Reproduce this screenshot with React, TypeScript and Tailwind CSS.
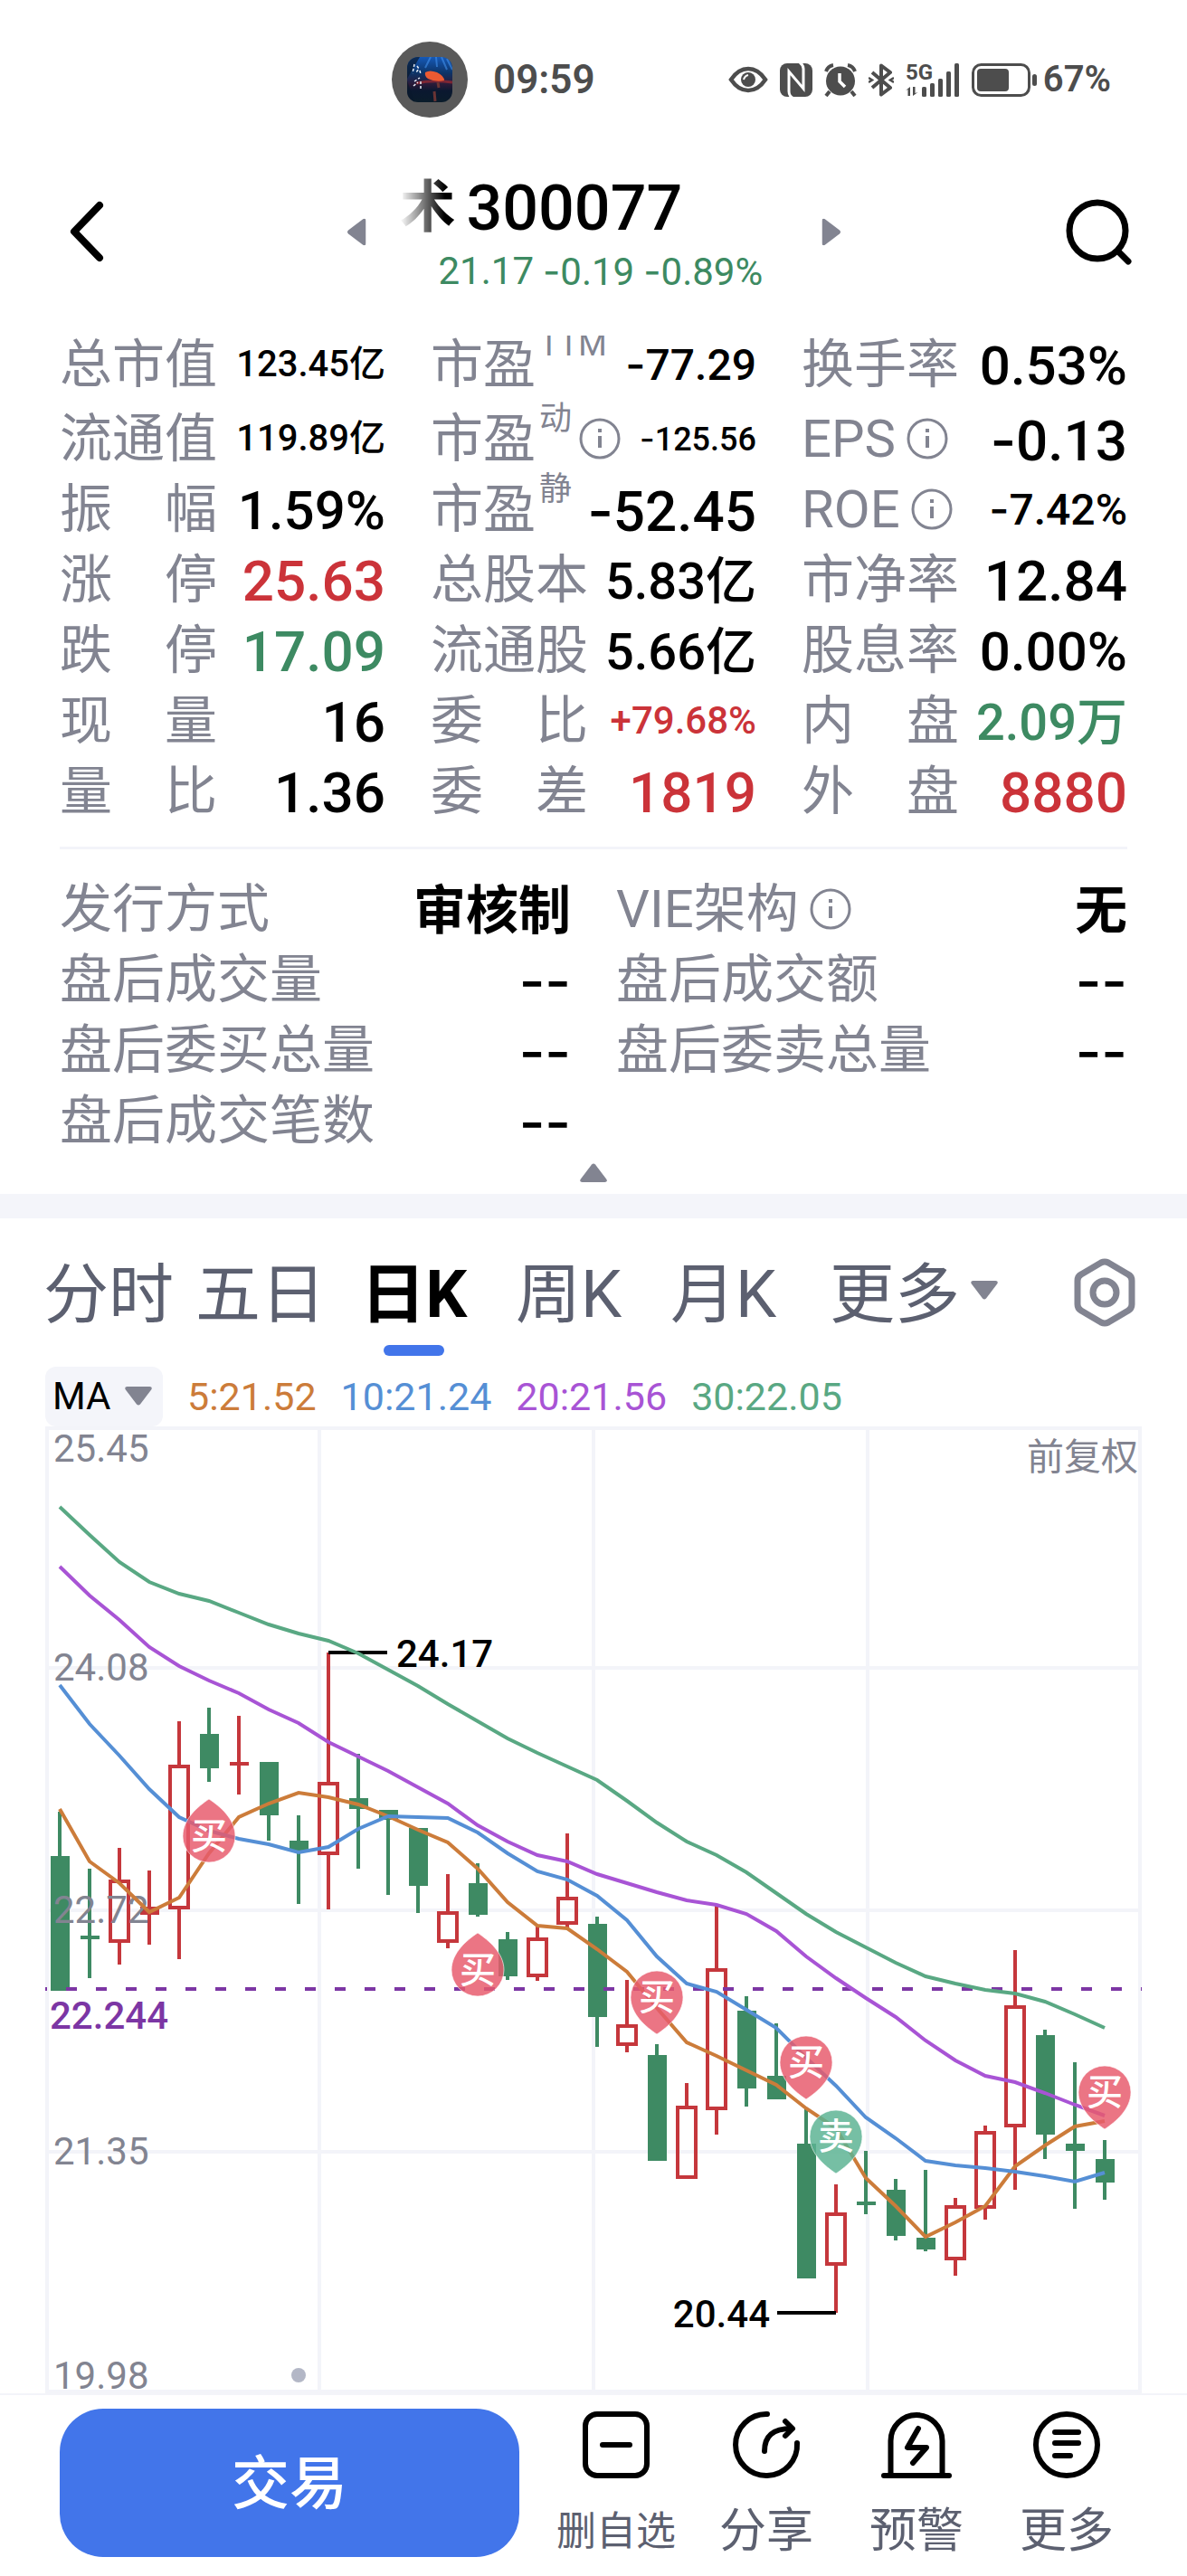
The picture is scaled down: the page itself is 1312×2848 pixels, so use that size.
import React from "react";
import clsx from "clsx";

const INK = "text-black";
const UP = "text-[#cb3339]";
const DOWN = "text-[#3d8a62]";

type Stat = {
  label: string;
  sup?: string;
  info?: boolean;
  value: string;
  size: string;
  color?: string;
};

const XS = "text-[36px]";
const SM = "text-[40px]";
const MD = "text-[48px]";
const LG = "text-[56px] pt-1";
const PCT = "text-[60px] pt-1";
const XL = "text-[62px] pt-1";

// row by row, three cells per row
const stats: Stat[] = [
  { label: "总市值", value: "123.45亿", size: SM },
  { label: "市盈", sup: "TTM", value: "-77.29", size: MD },
  { label: "换手率", value: "0.53%", size: PCT },
  { label: "流通值", value: "119.89亿", size: SM },
  { label: "市盈", sup: "动", info: true, value: "-125.56", size: XS },
  { label: "EPS", info: true, value: "-0.13", size: XL },
  { label: "振　幅", value: "1.59%", size: PCT },
  { label: "市盈", sup: "静", value: "-52.45", size: XL },
  { label: "ROE", info: true, value: "-7.42%", size: MD },
  { label: "涨　停", value: "25.63", size: XL, color: UP },
  { label: "总股本", value: "5.83亿", size: LG },
  { label: "市净率", value: "12.84", size: XL },
  { label: "跌　停", value: "17.09", size: XL, color: DOWN },
  { label: "流通股", value: "5.66亿", size: LG },
  { label: "股息率", value: "0.00%", size: PCT },
  { label: "现　量", value: "16", size: XL },
  { label: "委　比", value: "+79.68%", size: "text-[42px]", color: UP },
  { label: "内　盘", value: "2.09万", size: LG, color: DOWN },
  { label: "量　比", value: "1.36", size: XL },
  { label: "委　差", value: "1819", size: XL, color: UP },
  { label: "外　盘", value: "8880", size: XL, color: UP },
];

const details: Stat[] = [
  { label: "发行方式", value: "审核制", size: "text-[58px] pt-1 font-semibold" },
  { label: "VIE架构", info: true, value: "无", size: "text-[58px] pt-1 font-semibold" },
  { label: "盘后成交量", value: "--", size: XL },
  { label: "盘后成交额", value: "--", size: XL },
  { label: "盘后委买总量", value: "--", size: XL },
  { label: "盘后委卖总量", value: "--", size: XL },
  { label: "盘后成交笔数", value: "--", size: XL },
];

// [kind, high, body top, body bottom, low] in chart units
type Candle = ["up" | "down", number, number, number, number];

const candles: Candle[] = [
  ["down", 426, 475, 624, 624],
  ["down", 489, 563, 567, 610],
  ["up", 466, 501, 571, 595],
  ["up", 491, 531, 540, 573],
  ["up", 326, 374, 534, 589],
  ["down", 311, 340, 378, 393],
  ["up", 320, 371, 375, 407],
  ["down", 371, 371, 430, 458],
  ["down", 430, 458, 470, 528],
  ["up", 250, 393, 474, 534],
  ["down", 362, 411, 423, 489],
  ["down", 424, 424, 435, 518],
  ["down", 444, 444, 508, 538],
  ["up", 495, 536, 571, 577],
  ["down", 483, 505, 540, 542],
  ["down", 559, 567, 608, 612],
  ["up", 553, 565, 609, 613],
  ["up", 450, 520, 551, 554],
  ["down", 542, 550, 653, 686],
  ["up", 612, 661, 685, 692],
  ["down", 683, 695, 812, 812],
  ["up", 726, 751, 832, 832],
  ["up", 530, 599, 756, 783],
  ["down", 630, 646, 732, 752],
  ["down", 660, 718, 744, 744],
  ["down", 754, 793, 942, 942],
  ["up", 838, 869, 928, 980],
  ["down", 801, 857, 861, 871],
  ["down", 832, 844, 895, 900],
  ["down", 822, 897, 910, 912],
  ["up", 853, 861, 922, 939],
  ["up", 773, 779, 865, 877],
  ["up", 579, 640, 775, 844],
  ["down", 667, 673, 783, 810],
  ["down", 703, 793, 801, 865],
  ["down", 789, 810, 836, 855],
];

const averages = [
  {
    label: "5:21.52",
    text: "text-[#cc7c3a]",
    stroke: "#cc7c3a",
    points: [423, 481, 505, 537, 521, 472, 432, 417, 405, 410, 418, 431, 446, 460, 489, 526, 552, 555, 578, 603, 643, 681, 696, 712, 728, 754, 776, 831, 862, 896, 880, 862, 818, 795, 774, 768],
  },
  {
    label: "10:21.24",
    text: "text-[#558fd5]",
    stroke: "#558fd5",
    points: [286, 329, 364, 401, 432, 447, 456, 462, 471, 465, 445, 431, 432, 433, 449, 472, 492, 501, 519, 546, 586, 616, 625, 645, 665, 698, 729, 764, 787, 812, 817, 820, 824, 829, 835, 825],
  },
  {
    label: "20:21.56",
    text: "text-[#a854d5]",
    stroke: "#a854d5",
    points: [155, 187, 214, 244, 265, 281, 295, 313, 328, 349, 365, 381, 399, 417, 441, 459, 474, 481, 495, 505, 515, 524, 529, 539, 558, 586, 610, 632, 653, 679, 701, 718, 725, 737, 750, 762],
  },
  {
    label: "30:22.05",
    text: "text-[#59a883]",
    stroke: "#59a883",
    points: [89, 120, 150, 172, 185, 193, 206, 219, 229, 237, 251, 269, 287, 307, 326, 345, 361, 376, 391, 414, 438, 459, 474, 493, 516, 539, 559, 576, 593, 608, 616, 623, 627, 636, 650, 665],
  },
];

// y is the middle of the round part
const trades = [
  { at: 5, y: 453, side: "买", tip: "up" },
  { at: 14, y: 601, side: "买", tip: "up" },
  { at: 20, y: 631, side: "买", tip: "down" },
  { at: 25, y: 703, side: "买", tip: "down" },
  { at: 26, y: 785, side: "卖", tip: "down" },
  { at: 35, y: 736, side: "买", tip: "down" },
];

const xOf = (i: number) => 16 + i * 33;

function InfoIcon({ className }: { className?: string }) {
  return (
    <svg viewBox="0 0 46 46" className={clsx("size-[46px] shrink-0", className)} fill="none" stroke="#828491">
      <circle cx="23" cy="23" r="21" strokeWidth="3" />
      <path d="M23 20v13" strokeWidth="4" />
      <path d="M23 12v4" strokeWidth="4" />
    </svg>
  );
}

function Triangle({ className }: { className?: string }) {
  return (
    <svg viewBox="0 0 30 21" className={clsx("w-[30px] h-[21px] shrink-0", className)} fill="#828491">
      <path d="M13 1.5Q15-.5 17 1.5L29.500 18Q30.500 21 27.500 21H2.500Q-.5 21 .5 18Z" />
    </svg>
  );
}

// The sign is set in Inter, whose hyphen is as wide as a minus
function Num({ value }: { value: string }) {
  const sign = value.match(/^-+/)?.[0] ?? "";
  return (
    <>
      {sign && <span className="font-['Inter']">{sign}</span>}
      {value.slice(sign.length)}
    </>
  );
}

function StatCell({ stat }: { stat: Stat }) {
  return (
    <div className="flex items-center h-[78px] whitespace-nowrap">
      <dt className="flex items-center text-[58px] leading-[78px] text-[#828491]">
        {stat.label}
        {stat.sup && <sup className="static ml-1 pb-11 text-[36px] leading-none">{stat.sup}</sup>}
        {stat.info && <InfoIcon className={stat.sup ? "ml-2" : "ml-3"} />}
      </dt>
      <dd className={clsx("ml-auto font-medium leading-[78px]", stat.size, stat.color ?? INK)}>
        <Num value={stat.value} />
      </dd>
    </div>
  );
}

function StatusBar() {
  return (
    <div className="flex items-center justify-between h-[176px] pl-[433px] pr-[84px] text-[#4d4d4d]">
      <div className="flex items-center gap-7">
        <div className="flex items-center justify-center size-[84px] rounded-full bg-[#5a5a5a]">
          <svg viewBox="0 0 50 50" className="size-[50px] rounded-[12px]">
            <defs>
              <linearGradient id="sky" x1="0" y1="0" x2="0" y2="1">
                <stop offset="0" stopColor="#1559b8" />
                <stop offset=".35" stopColor="#0d3468" />
                <stop offset=".6" stopColor="#2a1a38" />
                <stop offset=".75" stopColor="#0a1830" />
                <stop offset="1" stopColor="#0a1c2a" />
              </linearGradient>
            </defs>
            <rect width="50" height="50" fill="url(#sky)" />
            <path d="M0 0h14L0 24zM0 50V26l8 24z" fill="#08182c" opacity=".7" />
            <path d="M26 0l-6 12M32 0l1 11M38 0l6 14M44 2l6 12" stroke="#4b9dfb" strokeWidth="2" opacity=".5" />
            <path d="M10 29q18-4 40-1" stroke="#b52a2c" strokeWidth="3" fill="none" opacity=".6" />
            <path d="M20 17q5-3 13 0q8 4 8 9q-10 2-18-2q-4-3-3-7z" fill="#ec5a32" />
            <path d="M34 28l1 6M30 38l1 11" stroke="#6a3434" strokeWidth="3" fill="none" />
            <path d="M8 8l-2 10M11 10l2 3-3 4M14 15l1 4M8 27l6-4M7 32l5-4M15 27v9" stroke="#e8eef8" strokeWidth="1.500" strokeDasharray="3 2" fill="none" />
          </svg>
        </div>
        <time className="text-[44px] leading-none font-semibold">09:59</time>
      </div>
      <div className="flex items-center gap-[13px]">
        <svg viewBox="0 0 44 30" className="w-[44px] h-[30px]" fill="none" stroke="currentColor">
          <path d="M3 15Q11 3 22 3t19 12Q33 27 22 27T3 15Z" strokeWidth="4.500" />
          <circle cx="22" cy="15" r="8" fill="currentColor" stroke="none" />
          <path d="M17 15q1-4 5-5" stroke="white" strokeWidth="2" />
        </svg>
        <svg viewBox="0 0 36 37" className="w-[36px] h-[37px]" fill="none">
          <rect width="36" height="37" rx="8" fill="currentColor" />
          <path d="M14 38Q10 36 10 31V9L26 28V6Q26 2 22-1" stroke="white" strokeWidth="3" />
        </svg>
        <svg viewBox="0 0 36 37" className="w-[36px] h-[37px]" fill="none" stroke="currentColor">
          <circle cx="18" cy="19.500" r="16" fill="currentColor" stroke="none" />
          <path d="M2 9q2-6 8-7M34 9q-2-6-8-7" strokeWidth="4" />
          <path d="M6 31l-4 5M30 31l4 5" strokeWidth="4" />
          <path d="M17 11v9l6 6" stroke="white" strokeWidth="3.500" />
        </svg>
        <svg viewBox="0 0 28 37" className="w-[28px] h-[37px]" fill="none" stroke="currentColor" strokeWidth="4">
          <path d="M4 10l20 17-10 7.500V2.500L24 10 4 27" strokeLinejoin="round" />
          <path d="M0 16l4 2.500L0 21M28 16l-4 2.500 4 2.500" strokeWidth="2.500" />
        </svg>
        <svg viewBox="0 0 60 37" className="w-[60px] h-[37px] overflow-visible" fill="currentColor">
          <text x="0" y="18" fontSize="24" fontWeight="700" fontFamily="Roboto, sans-serif">5G</text>
          <path d="M5 26v10H2.500v-7L0 30zM8 36V26h2.500v7l3-1z" />
          <rect x="18" y="26" width="5" height="11" rx="1.500" />
          <rect x="27" y="22" width="5" height="15" rx="1.500" />
          <rect x="36" y="17" width="5" height="20" rx="1.500" />
          <rect x="45" y="9" width="5" height="28" rx="1.500" />
          <rect x="54" y="0" width="5" height="37" rx="1.500" />
        </svg>
        <svg viewBox="0 0 74 37" className="w-[74px] h-[37px]">
          <rect x="1.500" y="1.500" width="62" height="34" rx="9" fill="none" stroke="currentColor" strokeWidth="3" />
          <rect x="6" y="6" width="35" height="25" rx="4" fill="currentColor" />
          <rect x="67" y="12" width="5" height="13" rx="2.500" fill="currentColor" />
        </svg>
        <span className="text-[40px] leading-none font-semibold -ml-2">67%</span>
      </div>
    </div>
  );
}

// Sits over the top edge of the scrolled figures below it
function Header() {
  return (
    <header className="relative z-10 grid grid-cols-[1fr_547px_1fr] items-center h-[195px] pb-[35px] bg-white">
      <button aria-label="返回" className="justify-self-start ml-[76px]">
        <svg viewBox="0 0 40 68" className="w-[40px] h-[68px]" fill="none" stroke="black" strokeWidth="8" strokeLinecap="round" strokeLinejoin="round">
          <path d="M34 5L6 34l28 29" />
        </svg>
      </button>
      <div className="flex items-center">
        <button aria-label="上一只">
          <Triangle className="-rotate-90 -mx-1" />
        </button>
        <div className="flex-1 mt-[18px] ml-[37px]">
          <h1 className="flex items-center gap-3 text-[70px] leading-[70px] font-medium">
            <span className="text-[62px] font-semibold bg-linear-to-r from-transparent to-black to-80% bg-clip-text text-transparent">术</span>
            300077
          </h1>
          <p className={clsx("flex gap-[10px] pl-[43px] text-[42px] leading-[70px]", DOWN)}>
            <span>21.17</span>
            <span><Num value="-0.19" /></span>
            <span><Num value="-0.89%" /></span>
          </p>
        </div>
        <button aria-label="下一只">
          <Triangle className="rotate-90 -mx-1" />
        </button>
      </div>
      <button aria-label="搜索" className="justify-self-end mr-[60px]">
        <svg viewBox="0 0 76 76" className="size-[76px]" fill="none" stroke="black" strokeWidth="7" strokeLinecap="round">
          <circle cx="37" cy="37" r="31" />
          <path d="M60 60l11 11" />
        </svg>
      </button>
    </header>
  );
}

const tabs = ["分时", "五日", "日K", "周K", "月K"];

function Tabs() {
  return (
    <nav className="flex items-start h-[164px] pl-[36px] pr-[57px] pt-[35px] text-[72px] leading-[100px] text-[#5c6070] whitespace-nowrap">
      {tabs.map((t, i) => (
        <button
          key={t}
          className={clsx(
            "flex flex-col items-center",
            i < 2 ? "w-[168px]" : "w-[171px]",
            i === 2 && "font-bold text-black",
          )}
        >
          {t}
          {i === 2 && <span className="w-[67px] h-[12px] mt-[5px] rounded-full bg-[#4275ea]" />}
        </button>
      ))}
      <button className="flex items-center gap-3 ml-8">
        更多
        <Triangle className="rotate-180 -mt-3" />
      </button>
      <button aria-label="图表设置" className="ml-auto mt-[9px]">
        <svg viewBox="0 0 68 76" className="w-[68px] h-[76px]" fill="none" stroke="#828491" strokeWidth="7" strokeLinejoin="round">
          <path d="M30 5q4-2 8 0l22 13q4 2 4 7v26q0 5-4 7L38 71q-4 2-8 0L8 58q-4-2-4-7V25q0-5 4-7z" />
          <circle cx="34" cy="38" r="13" />
        </svg>
      </button>
    </nav>
  );
}

function Pin({ x, y, side, tip }: { x: number; y: number; side: string; tip: string }) {
  return (
    <g transform={`translate(${x} ${y})`}>
      <path
        d="M0 41C-12 33-29 19-29 0A29 29 0 0 1 29 0C29 19 12 33 0 41Z"
        transform={tip === "up" ? "scale(1 -1)" : undefined}
        fill={side === "买" ? "#e75a6d" : "#5cb392"}
        fillOpacity="0.84"
        stroke="white"
        strokeOpacity="0.6"
        strokeWidth="1"
      />
      <text y="14" textAnchor="middle" fontSize="40" fontWeight="500" fill="white">
        {side}
      </text>
    </g>
  );
}

function Chart() {
  return (
    <svg viewBox="0 0 1212 1069" className="block w-full overflow-visible" fontSize="42">
      <g stroke="#f3f4f9" strokeWidth="4">
        {[2, 267, 535, 802, 1067].map((y) => (
          <path key={y} d={`M0 ${y}H1212`} />
        ))}
        {[2, 303, 606, 909, 1210].map((x) => (
          <path key={x} d={`M${x} 0V1069`} />
        ))}
      </g>

      {candles.map(([kind, high, top, bottom, low], i) => {
        const x = xOf(i);
        const flat = bottom - top < 10;
        return kind === "down" ? (
          <g key={i} fill="#3e8a63">
            <rect x={x - 2} y={high} width="4" height={low - high} />
            <rect x={x - 10} y={top} width="21" height={bottom - top} />
          </g>
        ) : (
          <g key={i} fill="#c5373c">
            <rect x={x - 2} y={high} width="4" height={top - high} />
            <rect x={x - 2} y={bottom} width="4" height={low - bottom} />
            {flat ? (
              <rect x={x - 10} y={top} width="21" height={bottom - top} />
            ) : (
              <rect x={x - 10} y={top + 2} width="20" height={bottom - top - 4} fill="none" stroke="#c5373c" strokeWidth="4" />
            )}
          </g>
        );
      })}

      <g fill="#828491">
        <text x="9" y="39">25.45</text>
        <text x="9" y="281">24.08</text>
        <text x="9" y="549">22.72</text>
        <text x="9" y="816">21.35</text>
        <text x="9" y="1064">19.98</text>
        <text x="1208" y="48" fontSize="41" textAnchor="end">前复权</text>
      </g>
      <circle cx="280" cy="1049" r="8" fill="#b3b7c6" />

      <path d="M0 622H1212" stroke="#7c36a4" strokeWidth="4" strokeDasharray="12 21" strokeDashoffset="10" />
      <text x="5" y="666" fill="#7c36a4" fontWeight="500">22.244</text>

      <g stroke="black" strokeWidth="4">
        <path d="M313 250H378" />
        <path d="M809 980H874" />
      </g>
      <g fontWeight="500">
        <text x="388" y="266">24.17</text>
        <text x="801" y="996" textAnchor="end">20.44</text>
      </g>

      {averages.map((a) => (
        <polyline
          key={a.label}
          points={a.points.map((y, i) => `${xOf(i)},${y}`).join(" ")}
          fill="none"
          stroke={a.stroke}
          strokeWidth="4"
        />
      ))}

      {trades.map((t) => (
        <Pin key={t.at} x={xOf(t.at)} y={t.y} side={t.side} tip={t.tip} />
      ))}
    </svg>
  );
}

const actions = [
  {
    label: "删自选",
    size: "text-[44px]",
    icon: (
      <>
        <rect x="6" y="4" width="68" height="68" rx="13" />
        <path d="M25 38h30" />
      </>
    ),
  },
  {
    label: "分享",
    size: "text-[52px]",
    icon: (
      <>
        <path d="M74 36A34 34 0 1 1 41 4" />
        <path d="M38 45C38 28 47 20 68 20" />
        <path d="M61 12l8 8-8 8" />
      </>
    ),
  },
  {
    label: "预警",
    size: "text-[52px]",
    icon: (
      <>
        <path d="M11.500 71V33.500a28.500 28.500 0 0 1 57 0V71" />
        <path d="M4 72h72" />
        <path d="M42 20L30 41h21L36 58" />
      </>
    ),
  },
  {
    label: "更多",
    size: "text-[52px]",
    icon: (
      <>
        <circle cx="40" cy="38" r="34" />
        <path d="M27 24h26M27 36h26M27 50h17" />
      </>
    ),
  },
];

function BottomBar() {
  return (
    <footer className="flex items-start border-t-2 border-[#f3f4f9] pl-[66px] pr-[50px] pt-[15px] pb-[22px]">
      <button className="flex-1 h-[164px] pt-1 rounded-[48px] bg-[#4275ea] text-white text-[64px] leading-none font-medium">
        交易
      </button>
      <div className="flex ml-6">
        {actions.map((a) => (
          <button key={a.label} className="flex flex-col items-center w-[166px] text-[#5c6070]">
            <svg viewBox="0 0 80 76" className="w-[80px] h-[76px] mt-[2px]" fill="none" stroke="black" strokeWidth="6" strokeLinecap="round" strokeLinejoin="round">
              {a.icon}
            </svg>
            <span className={clsx("mt-7 leading-[60px]", a.size)}>{a.label}</span>
          </button>
        ))}
      </div>
    </footer>
  );
}

export default function App() {
  return (
    <div lang="zh-CN" className="bg-white text-black font-['Roboto','Noto_Sans_CJK_SC',sans-serif]">
      <StatusBar />
      <Header />

      <section className="px-[66px] -mt-[7px]">
        <dl className="grid grid-cols-3 grid-rows-[82px_repeat(6,78px)] gap-x-[50px]">
          {stats.map((s, i) => (
            <StatCell key={i} stat={s} />
          ))}
        </dl>
        <hr className="mt-[22px] border-t-3 border-[#f3f4f9]" />
        <dl className="grid grid-cols-2 gap-x-[50px] mt-[27px]">
          {details.map((s) => (
            <StatCell key={s.label} stat={s} />
          ))}
        </dl>
        <button aria-label="收起" className="block mx-auto mt-2 mb-[13px]">
          <Triangle />
        </button>
      </section>

      <div className="h-[27px] bg-[#f4f5fa]" />

      <Tabs />

      <section className="px-[50px]">
        <div className="flex items-center gap-[27px] h-[66px] text-[43px] leading-[66px]">
          <div className="relative">
            <select aria-label="指标" className="block appearance-none w-[130px] h-[66px] pl-2 rounded-[12px] bg-[#f4f5fa] text-[42px]">
              <option>MA</option>
              <option>BOLL</option>
            </select>
            <Triangle className="absolute right-3 top-[22px] rotate-180 pointer-events-none" />
          </div>
          {averages.map((a) => (
            <span key={a.label} className={a.text}>
              {a.label}
            </span>
          ))}
        </div>
        <Chart />
      </section>

      <BottomBar />
    </div>
  );
}
